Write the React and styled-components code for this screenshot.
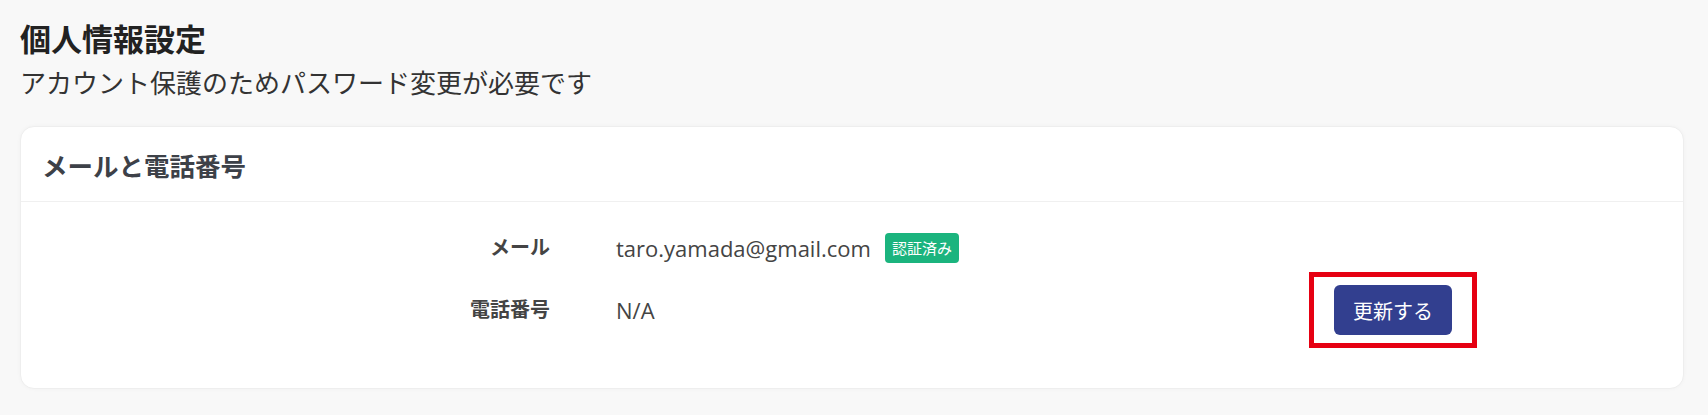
import { createGlobalStyle, styled } from 'styled-components';

const GlobalStyle = createGlobalStyle`
  html, body {
    margin: 0;
    background: #f8f8f8;
  }
  body {
    font-family: "Open Sans", "Noto Sans CJK JP", sans-serif;
    color: #333;
  }
`;

const Page = styled.div`
  padding: 19px 24px 26px 20px;
`;

const Title = styled.h1`
  margin: 0;
  font-size: 31px;
  line-height: 40px;
  font-weight: 700;
  color: #222;
`;

const Subtitle = styled.p`
  margin: 4px 0 23px;
  font-size: 26px;
  line-height: 40px;
  font-weight: 400;
  color: #333;
`;

const Card = styled.section`
  background: #fff;
  border: 1px solid #eeeeee;
  border-radius: 14px;
  box-shadow: 0 0 4px rgba(0, 0, 0, 0.03);
`;

const CardHeader = styled.h2`
  margin: 0;
  height: 74px;
  padding: 0 21px;
  display: flex;
  align-items: center;
  border-bottom: 1px solid #f0f0f0;
  font-size: 25.5px;
  font-weight: 700;
  color: #3d4148;
`;

const CardBody = styled.div`
  display: grid;
  grid-template-columns: 529px 1fr auto;
  column-gap: 66px;
  row-gap: 9px;
  align-items: center;
  padding: 31px 206px 40px 0;
`;

const Label = styled.div`
  text-align: right;
  font-size: 20px;
  line-height: 30px;
  font-weight: 700;
  color: #444;
`;

const Value = styled.div`
  display: flex;
  align-items: center;
  gap: 14px;
  font-size: 22px;
  line-height: 30px;
  color: #444;
`;

const Badge = styled.span`
  height: 30px;
  padding: 0 7px;
  border-radius: 4px;
  background: #1bb47e;
  color: #fff;
  font-size: 15px;
  line-height: 30px;
`;

const Highlight = styled.div`
  grid-column: 3;
  border: 5px solid #e60012;
  padding: 8px 20px;
  display: flex;
`;

const Button = styled.button`
  width: 118px;
  height: 50px;
  border: none;
  border-radius: 6px;
  background: #323f8f;
  color: #fff;
  font-family: inherit;
  font-size: 20px;
  cursor: pointer;
`;

export default function App() {
  return (
    <>
      <GlobalStyle />
      <Page>
        <Title>個人情報設定</Title>
        <Subtitle>アカウント保護のためパスワード変更が必要です</Subtitle>
        <Card>
          <CardHeader>メールと電話番号</CardHeader>
          <CardBody>
            <Label>メール</Label>
            <Value>
              taro.yamada@gmail.com
              <Badge>認証済み</Badge>
            </Value>
            <div />
            <Label>電話番号</Label>
            <Value>N/A</Value>
            <Highlight>
              <Button>更新する</Button>
            </Highlight>
          </CardBody>
        </Card>
      </Page>
    </>
  );
}
